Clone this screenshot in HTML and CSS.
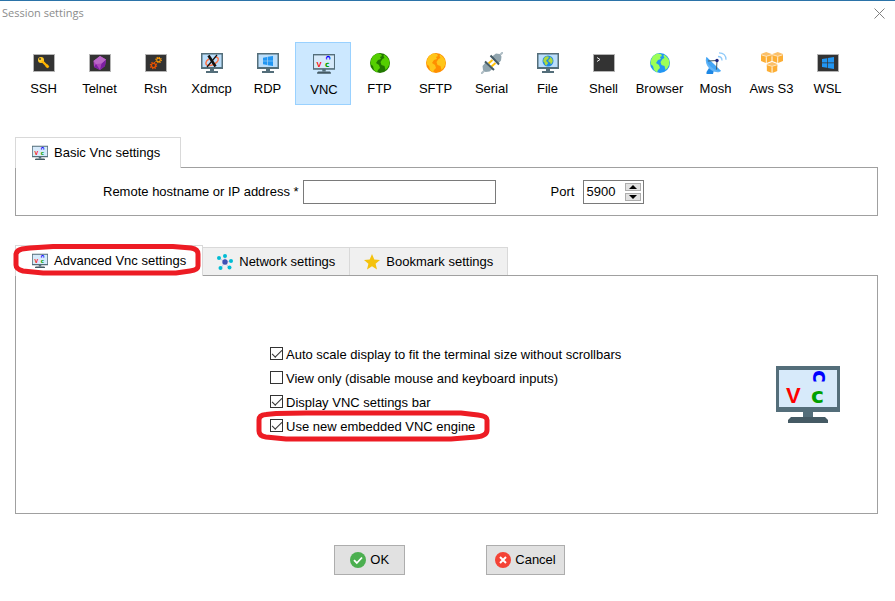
FILE: index.html
```html
<!DOCTYPE html>
<html lang="en">
<head>
<meta charset="utf-8">
<meta name="viewport" content="width=device-width, initial-scale=1">
<title>Session settings</title>
<link rel="stylesheet" href="styles.css">
</head>
<body>
<svg class="sprite" aria-hidden="true">
  <symbol id="screen" viewBox="0 0 22 22">
    <path fill="#546e7a" d="M0 1h22v16H0zM9 17h4v2h4v2H5v-2h4z"/>
    <path fill="#bbdefb" d="M1.500 2.500h19v12.500h-19z"/>
  </symbol>
  <symbol id="terminal" viewBox="0 0 22 22">
    <path fill="#b5b5b5" d="M0 2h22v18H0z"/>
    <path fill="#333" d="M1 3h20v16H1z"/>
  </symbol>
  <symbol id="vnc" viewBox="0 0 64 60">
    <path fill="#546e7a" d="M0 1h64v46H0zM27 47h10v5H27z"/>
    <path fill="#455a64" d="M15 52h34l3 3v3H12v-3z"/>
    <path fill="#d7eafa" d="M3 5h58v37H3z"/>
    <text class="letter red" x="10" y="38">V</text>
    <text class="letter round green" x="35" y="38">c</text>
    <text class="letter round blue" transform="translate(43 12) rotate(90)" x="-7" y="6">c</text>
  </symbol>
  <symbol id="land" viewBox="0 0 22 22">
    <path d="M4 4l4-2.500 4 .5 1 2-2 1 1 2-3 1-2 3 3 2 1 3-2 2-1 2.500-3-2.500-1-4-2.500-2L2 8zM15 2.500l3 2.500 2 3 .5 4-2 4-2 2-1-4-3-1-1-3 2-3 2-1-1-2z"/>
  </symbol>
  <symbol id="windows" viewBox="0 0 12 12">
    <path fill="#2196f3" d="M0 2l5-.8v4.400H0zM5.700 1L12 0v5.600H5.700zM0 6.300h5v4.500L0 10zM5.700 6.300H12V12l-6.300-1z"/>
  </symbol>
  <symbol id="gear" viewBox="0 0 10 10">
    <circle cx="5" cy="5" r="2.600" fill="none" stroke="currentColor" stroke-width="1.600"/>
    <circle cx="5" cy="5" r="4" fill="none" stroke="currentColor" stroke-width="1.600" stroke-dasharray="1.600 1.540"/>
  </symbol>
  <symbol id="cube" viewBox="0 0 12 12">
    <path fill="#fbc069" d="M6 0l5.500 2v3L6 6 .5 5V2z"/>
    <path fill="#fcae35" d="M.5 3L5.700 4.500V11.500L.5 9.500zM6.300 4.500L11.500 3v6.500L6.300 11.500z"/>
    <path fill="none" stroke="#fff0d8" stroke-width=".8" d="M1 3l5 1.500L11 3M6 4.500v7"/>
  </symbol>
</svg>

<header class="titlebar">
  <h1 class="title">Session settings</h1>
  <button class="close" type="button" aria-label="Close">
    <svg width="11" height="11" viewBox="0 0 11 11"><path d="M.5.5l10 10M10.500.5l-10 10" stroke="#808080" fill="none"/></svg>
  </button>
</header>

<main class="content">
  <nav class="toolbar" aria-label="Session type">
    <button class="tool" type="button"><svg class="icon" viewBox="0 0 22 22"><use href="#terminal"/><circle cx="8" cy="8" r="3" fill="#ffca28"/><path d="M9 9l6.500 6.500" stroke="#ffb300" stroke-width="2.400"/><path d="M13 15l2-2" stroke="#ffb300" stroke-width="2"/><circle cx="7" cy="7" r=".9" fill="#333"/></svg>SSH</button>
    <button class="tool" type="button"><svg class="icon" viewBox="0 0 22 22"><use href="#terminal"/><path fill="#ab47bc" d="M11 4l6 3.500-1 6.500-5 4-6-3-.5-6z"/><path fill="#7b1fa2" d="M11 18l5-4 1-6.500-4.500 4zM5 15l2-3 4 6z"/><path fill="#ba68c8" d="M11 4l6 3.500-4.500 4L7 12 4.500 9z"/></svg>Telnet</button>
    <button class="tool" type="button"><svg class="icon" viewBox="0 0 22 22"><use href="#terminal"/><g color="#e65100"><use href="#gear" x="4.500" y="9.500" width="8" height="8"/></g><g color="#ff9800"><use href="#gear" x="10" y="4.500" width="7" height="7"/></g></svg>Rsh</button>
    <button class="tool" type="button"><svg class="icon" viewBox="0 0 22 22"><use href="#screen"/><path d="M14 5c4 0 4 3 2 5s-6 4-9 3.500S4 9 8 7" fill="none" stroke="#ff7043" stroke-width="1.400"/><path d="M7.500 3.500l7 11" stroke="#111" stroke-width="2.600"/><path d="M16 3L6 15" stroke="#111" stroke-width="1.200"/></svg>Xdmcp</button>
    <button class="tool" type="button"><svg class="icon" viewBox="0 0 22 22"><use href="#screen"/><use href="#windows" x="6" y="4" width="10" height="10"/></svg>RDP</button>
    <button class="tool selected" type="button" aria-pressed="true"><svg class="icon"><use href="#vnc"/></svg>VNC</button>
    <button class="tool" type="button"><svg class="icon" viewBox="0 0 22 22"><circle cx="11" cy="11" r="10" fill="#217800"/><use href="#land" fill="#55cf00"/></svg>FTP</button>
    <button class="tool" type="button"><svg class="icon" viewBox="0 0 22 22"><circle cx="11" cy="11" r="10" fill="#ff8f00"/><use href="#land" fill="#ffc61a"/></svg>SFTP</button>
    <button class="tool" type="button"><svg class="icon" viewBox="0 0 22 22"><path d="M0 22l5-5M17 5l5-5" stroke="#b0bec5" stroke-width="2"/><path d="M7.500 11.500l4-3.500M10.500 14.500l4-3.500" stroke="#ffc107" stroke-width="2"/><path fill="#90a4ae" d="M4.500 10.500L1.500 14l.5 4 2.500 2 4-.5 3.500-3zM11 4.500L15 1.500l3.500.5 2 2.500-.5 4L17 12z"/><path d="M4 9.500l9 8.500M9.500 3.500l8.500 9" stroke="#455a64" stroke-width="2"/></svg>Serial</button>
    <button class="tool" type="button"><svg class="icon" viewBox="0 0 22 22"><use href="#screen"/><circle cx="11" cy="9" r="5.500" fill="#1e88e5"/><use href="#land" x="5.500" y="3.500" width="11" height="11" fill="#aed93b"/></svg>File</button>
    <button class="tool" type="button"><svg class="icon" viewBox="0 0 22 22"><use href="#terminal"/><path d="M4 5.500L7 7.500 4 9.500" fill="none" stroke="#eee"/></svg>Shell</button>
    <button class="tool" type="button"><svg class="icon" viewBox="0 0 22 22"><circle cx="11" cy="11" r="10" fill="#2196f3"/><use href="#land" fill="#9cff57"/></svg>Browser</button>
    <button class="tool" type="button"><svg class="icon" viewBox="0 0 22 22"><path fill="#1e88e5" d="M4 16l5 2-1 4H1.500v-2z"/><path fill="#64b5f6" d="M1.500 5C-.5 10 2 15 6 18c4 2.500 8 3 10 1z"/><path fill="#42a5f5" d="M1.500 5L16 19c-4 0-8-2-11-5S1 8 1.500 5z"/><path d="M3 9l9-.5-.5 9" fill="none" stroke="#455a64"/><circle cx="12" cy="8.500" r="1.700" fill="#1a237e"/><path d="M13 4.500c2.500 0 4 1.500 4 4M14 .8c4.500 0 7 2.700 7 7" fill="none" stroke="#90caf9" stroke-width="1.300"/></svg>Mosh</button>
    <button class="tool" type="button"><svg class="icon" viewBox="0 0 22 22"><use href="#cube" x="-.5" y="0" width="11.500" height="11.500"/><use href="#cube" x="11" y="0" width="11.500" height="11.500"/><use href="#cube" x="5.300" y="10" width="11.500" height="11.500"/></svg>Aws S3</button>
    <button class="tool" type="button"><svg class="icon" viewBox="0 0 22 22"><use href="#terminal"/><use href="#windows" x="5" y="5" width="12" height="12"/></svg>WSL</button>
  </nav>

  <section class="group">
    <div class="tabs" role="tablist">
      <button class="tab active" type="button" role="tab" aria-selected="true"><svg class="small"><use href="#vnc"/></svg>Basic Vnc settings</button>
    </div>
    <form class="panel basic">
      <label for="host">Remote hostname or IP address *</label>
      <input class="host" id="host" type="text">
      <label class="port-label" for="port">Port</label>
      <span class="spinner">
        <input class="port" id="port" type="text" inputmode="numeric" value="5900">
        <span class="steps">
          <button class="step" type="button" aria-label="Increase"><svg width="8" height="4" viewBox="0 0 8 4"><path d="M4 0l4 4H0z"/></svg></button>
          <button class="step" type="button" aria-label="Decrease"><svg width="8" height="4" viewBox="0 0 8 4"><path d="M0 0h8L4 4z"/></svg></button>
        </span>
      </span>
    </form>
  </section>

  <section class="group">
    <div class="tabs" role="tablist">
      <button class="tab active marked" type="button" role="tab" aria-selected="true"><svg class="small"><use href="#vnc"/></svg>Advanced Vnc settings
        <svg class="ring ring-tab" viewBox="0 0 188 32" preserveAspectRatio="none"><path d="M17 4L40 2.500H160L178 4Q185 5 185 10V22Q185 26 177 27L163 29H30L10 27Q3 25 3 21V10Q4 6 9 5z"/></svg>
      </button>
      <button class="tab" type="button" role="tab" aria-selected="false"><svg class="small" viewBox="0 0 16 16"><path d="M8 8L2 4M8 8V2M8 8l6-1M8 8l4 6M8 8l-4 6" stroke="#c5cae9"/><g fill="#00bcd4"><circle cx="2" cy="4" r="2"/><circle cx="8" cy="2" r="2"/><circle cx="14" cy="7" r="2"/><circle cx="12.500" cy="13.500" r="2"/><circle cx="3.500" cy="14" r="2"/></g><circle cx="8" cy="8" r="2.700" fill="#3f51b5"/></svg>Network settings</button>
      <button class="tab" type="button" role="tab" aria-selected="false"><svg class="small" viewBox="0 0 16 16"><path fill="#f4c20d" d="M8 0l2.300 5.500 5.700.4-4.400 3.800L13 15.500l-5-3.200-5 3.200 1.400-5.800L0 5.900l5.700-.4z"/></svg>Bookmark settings</button>
    </div>
    <div class="panel advanced">
      <div class="options">
        <label class="option"><input type="checkbox" checked>Auto scale display to fit the terminal size without scrollbars</label>
        <label class="option"><input type="checkbox">View only (disable mouse and keyboard inputs)</label>
        <label class="option"><input type="checkbox" checked>Display VNC settings bar</label>
        <label class="option marked"><input type="checkbox" checked>Use new embedded VNC engine
          <svg class="ring ring-option" viewBox="0 0 234 32" preserveAspectRatio="none"><path d="M20 3.500L50 3H205L222 5Q231 6 231 10V20Q231 26 220 27L195 29H30L10 27Q3 26 3 21V10Q3 5 10 4.500z"/></svg>
        </label>
      </div>
      <svg class="logo"><use href="#vnc"/></svg>
    </div>
  </section>

  <footer class="actions">
    <button class="action" type="button"><svg class="small" viewBox="0 0 16 16"><circle cx="8" cy="8" r="8" fill="#4caf50"/><path d="M4 8.200l2.800 2.800L12 5.500" fill="none" stroke="#fff" stroke-width="1.800"/></svg>OK</button>
    <button class="action" type="button"><svg class="small" viewBox="0 0 16 16"><circle cx="8" cy="8" r="8" fill="#f44336"/><path d="M5 5l6 6M11 5l-6 6" stroke="#fff" stroke-width="2"/></svg>Cancel</button>
  </footer>
</main>
</body>
</html>
```
FILE: styles.css
```css
* {
  box-sizing: border-box;
}

body {
  margin: 0;
  border-top: 1px solid #2b73a8;
  background: #fff;
  color: #000;
  font: 13px/16px "Liberation Sans", Arial, sans-serif;
}

button,
input {
  margin: 0;
  padding: 0;
  border: 0;
  border-radius: 0;
  background: none;
  color: inherit;
  font: inherit;
}

svg {
  display: block;
  flex: none;
}

.sprite {
  display: none;
}

.letter {
  font: bold 22px "Liberation Sans", sans-serif;
}

.round {
  font-family: "DejaVu Sans", sans-serif;
}

.red {
  fill: #f00;
}

.green {
  fill: #00a000;
}

.blue {
  fill: #00f;
}

.titlebar {
  display: flex;
  align-items: center;
  justify-content: space-between;
  height: 24px;
  padding: 0 10px 0 2px;
}

.title {
  margin: 0;
  color: #8c8c8c;
  font: 11px/16px "Open Sans", "Segoe UI", sans-serif;
}

.content {
  padding: 17px 17px 20px 15px;
}

.toolbar {
  display: flex;
  margin-bottom: 32px;
}

.tool {
  display: flex;
  flex-direction: column;
  align-items: center;
  gap: 7px;
  width: 56px;
  height: 63px;
  padding: 10px 0 0 1px;
  white-space: nowrap;
}

.selected {
  padding-left: 2px;
  border: 1px solid #99d1ff;
  background: #cce8ff;
}

.icon {
  width: 22px;
  height: 22px;
}

.group {
  margin-bottom: 29px;
}

.tabs {
  display: flex;
  align-items: flex-end;
}

.tab {
  display: flex;
  align-items: center;
  gap: 6px;
  height: 28px;
  padding: 0 14px;
  border: 1px solid #d9d9d9;
  border-width: 1px 1px 0 0;
  background: #f0f0f0;
}

.active {
  position: relative;
  min-width: 166px;
  height: 31px;
  margin-bottom: -1px;
  padding: 0 16px;
  border-left-width: 1px;
  background: #fff;
}

.small {
  width: 16px;
  height: 16px;
}

.panel {
  display: flex;
  align-items: center;
  border: 1px solid #a0a0a0;
}

.basic {
  padding: 12px 0 11px 87px;
}

.host {
  width: 193px;
  height: 24px;
  margin-left: 4px;
  padding: 0 4px;
  border: 1px solid #7a7a7a;
}

.port-label {
  margin-left: 55px;
}

.spinner {
  display: flex;
  align-items: center;
  width: 61px;
  height: 24px;
  margin-left: 9px;
  padding: 0 2px;
  border: 1px solid #7a7a7a;
}

.port {
  flex: 1;
  min-width: 0;
}

.steps {
  display: grid;
  gap: 2px;
}

.step {
  display: grid;
  place-items: center;
  width: 16px;
  height: 8px;
  border: 1px solid #adadad;
  background: #e1e1e1;
}

.advanced {
  justify-content: space-between;
  padding: 66px 37px 66px 254px;
}

.options {
  margin: 1px 0 8px;
}

.option {
  display: flex;
  align-items: center;
  gap: 3px;
  height: 24px;
}

.option input {
  display: grid;
  place-items: center;
  appearance: none;
  width: 13px;
  height: 13px;
  margin-bottom: 3px;
  border: 1px solid #333;
  background: #fff;
}

.option input:checked::after {
  content: "";
  width: 9px;
  height: 4px;
  margin-bottom: 3px;
  border: solid #333;
  border-width: 0 0 1px 1px;
  transform: rotate(-45deg);
}

.marked {
  position: relative;
}

.ring {
  position: absolute;
  height: 32px;
  overflow: visible;
  fill: none;
  stroke: #ed1c24;
  stroke-width: 5px;
  pointer-events: none;
}

.ring-tab {
  z-index: 1;
  top: -2px;
  left: -3px;
  width: 188px;
}

.ring-option {
  top: -5px;
  left: -14px;
  width: 234px;
}

.logo {
  width: 64px;
  height: 60px;
}

.actions {
  display: flex;
  justify-content: center;
  gap: 81px;
  margin-top: 31px;
  padding-left: 6px;
}

.action {
  display: flex;
  align-items: center;
  justify-content: center;
  gap: 4px;
  min-width: 71px;
  height: 30px;
  padding: 0 8px;
  border: 1px solid #adadad;
  background: #e1e1e1;
}
```
